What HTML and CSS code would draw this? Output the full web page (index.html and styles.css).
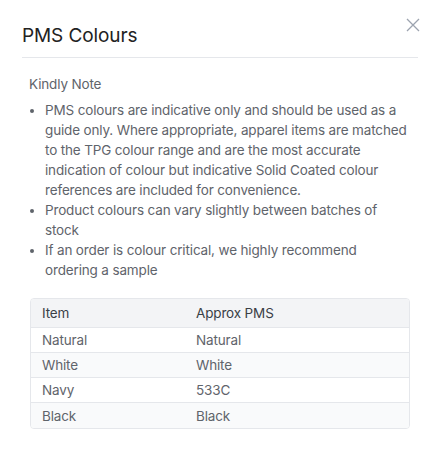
FILE: index.html
```html
<!DOCTYPE html>
<html>
<head>
<meta charset="utf-8">
<link rel="stylesheet" href="styles.css">
</head>
<body>
<div class="modal">
  <div class="modal-header">
    <h2 class="title">PMS Colours</h2>
    <button class="close" aria-label="Close">
      <svg width="14" height="14" viewBox="0 0 14 14"><path d="M1 1L13 13M13 1L1 13" stroke="#9ca3af" stroke-width="1.3" fill="none"/></svg>
    </button>
  </div>
  <div class="modal-body">
    <p class="note">Kindly Note</p>
    <ul class="list">
      <li>PMS colours are indicative only and should be used as a guide only. Where appropriate, apparel items are matched to the TPG colour range and are the most accurate indication of colour but indicative Solid Coated colour references are included for convenience.</li>
      <li>Product colours can vary slightly between batches of stock</li>
      <li>If an order is colour critical, we highly recommend ordering a sample</li>
    </ul>
    <table class="pms">
      <colgroup><col class="c1"><col></colgroup>
      <thead>
        <tr><th>Item</th><th>Approx PMS</th></tr>
      </thead>
      <tbody>
        <tr><td>Natural</td><td>Natural</td></tr>
        <tr><td>White</td><td>White</td></tr>
        <tr><td>Navy</td><td>533C</td></tr>
        <tr><td>Black</td><td>Black</td></tr>
      </tbody>
    </table>
  </div>
</div>
</body>
</html>
```

FILE: styles.css
```css
* { box-sizing: border-box; }
html, body { margin: 0; padding: 0; background: #fff; }
body { font-family: Inter, "Noto Sans", sans-serif; color: #555b63; }
.modal { width: 440px; height: 459px; }
.modal-header {
  display: flex; align-items: flex-start; justify-content: space-between;
  margin: 0 22px; padding-top: 24px; height: 58px;
  border-bottom: 1px solid #e5e7eb;
}
.title { margin: 0; font-size: 19px; font-weight: 400; color: #222; line-height: 24px; letter-spacing: -0.1px; }
.close {
  background: none; border: 0; padding: 0; margin: -6px -2px 0 0; cursor: pointer; display: flex;
}
.modal-body { padding: 16px 31px 0 29px; }
.note { margin: 0; font-size: 13.5px; line-height: 20px; color: #5f646b; letter-spacing: -0.15px; }
.list { margin: 6px 0 0; padding-left: 16px; font-size: 13.5px; line-height: 20px; color: #5f646b; letter-spacing: -0.15px; }
.pms {
  margin-top: 18px; width: 380px; margin-left: 1px; table-layout: fixed;
  border-collapse: separate; border-spacing: 0;
  border: 1px solid #e5e7eb; border-radius: 4px; overflow: hidden;
  font-size: 13.5px; color: #5f646b; letter-spacing: -0.15px;
}
.pms .c1 { width: 154px; }
.pms th { text-align: left; font-weight: 400; color: #3a3f46; background: #f3f4f6; height: 29px; padding: 0 12px 0 11px; border-bottom: 1px solid #e5e7eb; }
.pms td { height: 25px; padding: 0 12px 0 11px; border-bottom: 1px solid #e5e7eb; }
.pms tr:last-child td { border-bottom: 0; }
.pms tbody tr:nth-child(even) td { background: #f9fafb; }
```
